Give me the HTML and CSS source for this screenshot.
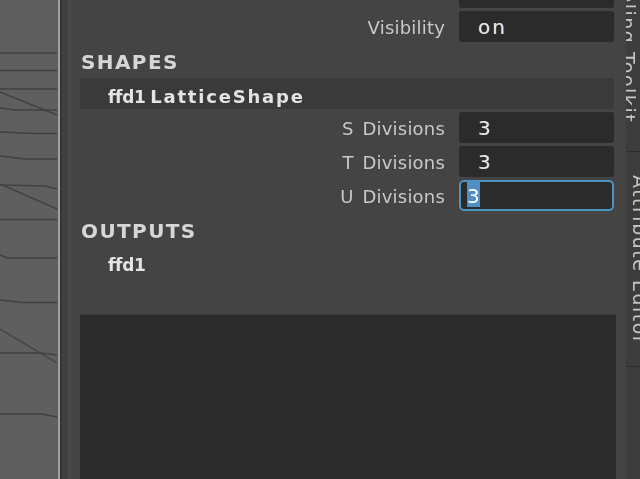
FILE: index.html
```html
<!DOCTYPE html>
<html lang="en">
<head>
<meta charset="utf-8">
<title>Channel Box</title>
<link rel="stylesheet" href="styles.css">
</head>
<body>
<div class="app">
  <div class="viewport">
    <svg class="lattice" width="58" height="479" viewBox="0 0 58 479" fill="none" stroke="#424242" stroke-width="1.4">
      <path d="M0 53H57"/><path d="M0 70.5H57"/><path d="M0 89H57"/>
      <path d="M0 92L57 115"/><path d="M0 108L15 110H57"/>
      <path d="M0 132L35 133.5H57"/><path d="M0 156L25 159H57"/>
      <path d="M0 184L57 209"/><path d="M0 185L45 186L57 189"/>
      <path d="M0 219.5H57"/><path d="M0 255L8 258H57"/>
      <path d="M0 300L22 302.500H57"/><path d="M0 329L57 363"/>
      <path d="M0 353H40L57 355"/><path d="M0 414H42L57 417"/>
    </svg>
  </div>
  <div class="splitter"></div>
  <main class="panel">
    <div class="row clipped"><span class="label">Scale Z</span><span class="field"><span class="value">1</span></span></div>
    <div class="row"><span class="label">Visibility</span><span class="field"><span class="value">on</span></span></div>
    <h2 class="section">SHAPES</h2>
    <div class="node bar"><span>ffd1</span> <span class="wide">LatticeShape</span></div>
    <div class="row"><span class="label">S Divisions</span><span class="field"><span class="value">3</span></span></div>
    <div class="row"><span class="label">T Divisions</span><span class="field"><span class="value">3</span></span></div>
    <div class="row"><span class="label">U Divisions</span><span class="field active"><span class="selected">3</span></span></div>
    <h2 class="section">OUTPUTS</h2>
    <div class="node plain"><span>ffd1</span></div>
    <div class="well"></div>
  </main>
  <aside class="tabs">
    <div class="tab first"><span>Modeling Toolkit</span></div>
    <div class="tab second"><span>Attribute Editor</span></div>
    <div class="tab rest"></div>
  </aside>
</div>
</body>
</html>
```

FILE: styles.css
```css
* { box-sizing: border-box; }
html, body { margin: 0; height: 100%; overflow: hidden; background: #444; }
body { font-family: "DejaVu Sans", "Liberation Sans", sans-serif; }

.app { display: flex; width: 640px; height: 479px; overflow: hidden; }

.viewport { width: 58px; flex: none; background: #5f5f5f; }
.lattice { display: block; filter: blur(0.4px); }

.splitter {
  width: 13px; flex: none;
  background: linear-gradient(90deg, #a0a0a0 0 2px, #363636 2px 4px, #404040 4px 10px, #4a4a4a 10px);
}

.panel {
  width: 555px; flex: none; padding: 0 12px 0 9px;
  background: #444; height: 479px; overflow: hidden;
}

.row { display: flex; height: 31px; margin-top: 3px; }
.clipped { margin-top: -23px; }

.label {
  width: 379px; flex: none; padding-right: 14px; text-align: right;
  line-height: 34px; font-size: 18px; color: #c9c9c9; filter: blur(0.5px);
  letter-spacing: 0.2px; word-spacing: 3px;
}

.field {
  flex: 1; padding-left: 19px; background: #2b2b2b; border-radius: 3px;
  line-height: 33px; font-size: 20px; color: #e6e6e6;
}
.value { display: inline-block; letter-spacing: 2px; filter: blur(0.4px); text-shadow: -0.5px 0 rgba(70, 130, 200, 0.7), 0.5px 0 rgba(170, 120, 60, 0.7); }

.active { padding-left: 6px; border: 2px solid #4d93c2; border-radius: 5px; line-height: 29px; }
.selected { display: inline-block; height: 25px; background: #4f8fc6; color: #fff; filter: blur(0.4px); }

.section {
  margin: 0; height: 36px; padding-left: 1px;
  line-height: 41px; font-size: 20px; font-weight: 700; letter-spacing: 1.4px;
  color: #d6d6d6; filter: blur(0.5px);
}

.node {
  height: 31px; margin-top: 3px; padding-left: 28px;
  line-height: 37px; font-size: 17px; font-weight: 700; letter-spacing: -0.3px;
  color: #e4e4e4; word-spacing: -1px;
}
.node span { filter: blur(0.4px); display: inline-block; }
.wide { font-size: 18px; letter-spacing: 1.8px; }
.plain { line-height: 31px; }
.section + .node.bar { margin-top: 0; background: #3a3a3a; }

.well { height: 170px; margin: 33px -2px 0 0; background: #2b2b2b; border-top: 1px solid #3c3c3c; }

.tabs { flex: 1; display: flex; flex-direction: column; background: #3d3d3d; overflow: hidden; }
.tab { flex: none; overflow: hidden; padding-left: 2px; border-bottom: 1px solid #2e2e2e; }
.tab span {
  display: block; writing-mode: vertical-rl; white-space: nowrap;
  font-size: 19px; line-height: 24px; letter-spacing: 1.5px; color: #c4c4c4; filter: blur(0.4px);
}
.first { height: 152px; display: flex; flex-direction: column; justify-content: flex-end; padding-bottom: 28px; }
.second { height: 215px; padding-top: 23px; }
.rest { flex: 1; border-bottom: 0; }
```
